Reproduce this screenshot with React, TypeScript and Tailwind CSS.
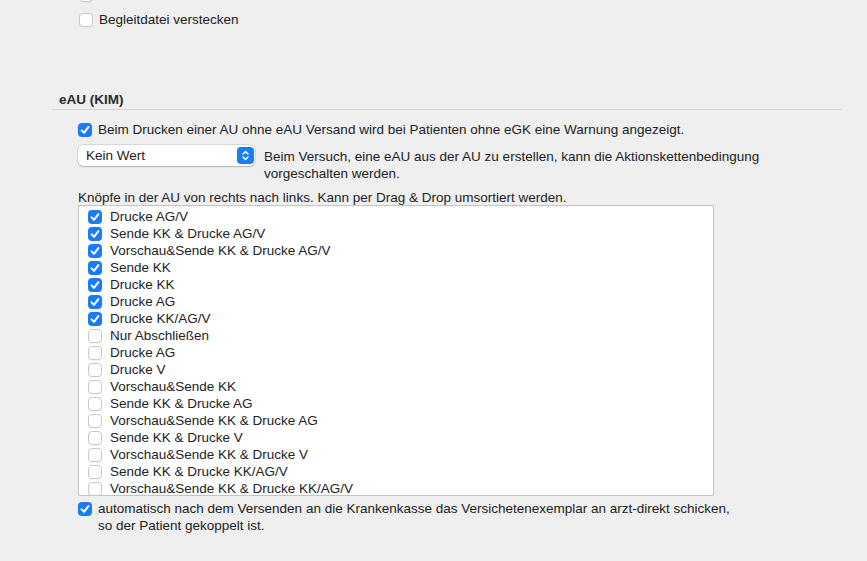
import React from 'react';

type Item = { label: string; checked: boolean };

const items: Item[] = [
  { label: 'Drucke AG/V', checked: true },
  { label: 'Sende KK & Drucke AG/V', checked: true },
  { label: 'Vorschau&Sende KK & Drucke AG/V', checked: true },
  { label: 'Sende KK', checked: true },
  { label: 'Drucke KK', checked: true },
  { label: 'Drucke AG', checked: true },
  { label: 'Drucke KK/AG/V', checked: true },
  { label: 'Nur Abschließen', checked: false },
  { label: 'Drucke AG', checked: false },
  { label: 'Drucke V', checked: false },
  { label: 'Vorschau&Sende KK', checked: false },
  { label: 'Sende KK & Drucke AG', checked: false },
  { label: 'Vorschau&Sende KK & Drucke AG', checked: false },
  { label: 'Sende KK & Drucke V', checked: false },
  { label: 'Vorschau&Sende KK & Drucke V', checked: false },
  { label: 'Sende KK & Drucke KK/AG/V', checked: false },
  { label: 'Vorschau&Sende KK & Drucke KK/AG/V', checked: false },
];

function Check({ checked }: { checked: boolean }) {
  if (checked) {
    return (
      <span className="flex h-[14px] w-[14px] shrink-0 items-center justify-center rounded-[4px] bg-[#1a7cf6]">
        <svg width="14" height="14" viewBox="0 0 14 14" fill="none" aria-hidden>
          <path d="M3.6 7.4 L6 9.9 L10.4 4.1" stroke="white" strokeWidth="2" strokeLinecap="round" strokeLinejoin="round" />
        </svg>
      </span>
    );
  }
  return (
    <span className="h-[14px] w-[14px] shrink-0 rounded-[4px] border border-[#c9c9c9] bg-white shadow-[0_0.5px_0.5px_rgba(0,0,0,0.08)]" />
  );
}

export default function App() {
  return (
    <div className="h-[561px] w-[867px] overflow-hidden bg-[#efefef] font-['Liberation_Sans',Arial,sans-serif] text-[13.5px] text-[#222]">
      {/* partially scrolled-off row */}
      <div className="-mt-[12px] flex h-[14px] items-center pl-[79px]">
        <Check checked={false} />
      </div>

      <div className="mt-[11px] flex h-[14px] items-center gap-[6px] pl-[79px]">
        <Check checked={false} />
        <span className="leading-[14px]">Begleitdatei verstecken</span>
      </div>

      <div className="ml-[52px] mt-[64px] h-[19px] w-[790px] border-b border-[#d6d6d6] pl-[7px] leading-[18px] font-bold text-[#2c2c2c]">
        eAU (KIM)
      </div>

      <div className="ml-[78px] mt-[13px] flex h-[14px] items-center gap-[6px]">
        <Check checked />
        <span className="leading-[14px]">
          Beim Drucken einer AU ohne eAU Versand wird bei Patienten ohne eGK eine Warnung angezeigt.
        </span>
      </div>

      <div className="ml-[78px] mt-[8px] flex items-start gap-[9px]">
        <div className="flex h-[21px] w-[177px] shrink-0 items-center justify-between rounded-[5px] bg-white pl-[8px] pr-[1px] shadow-[0_0_0_0.5px_rgba(0,0,0,0.18),0_1px_1.5px_rgba(0,0,0,0.18)]">
          <span className="leading-[17px]">Kein Wert</span>
          <span className="flex h-[17px] w-[17px] items-center justify-center rounded-[4px] bg-[#1a7cf6]">
            <svg width="17" height="17" viewBox="0 0 17 17" fill="none" aria-hidden>
              <path d="M6 7 L8.5 4.6 L11 7" stroke="white" strokeWidth="1.5" strokeLinecap="round" strokeLinejoin="round" />
              <path d="M6 10 L8.5 12.4 L11 10" stroke="white" strokeWidth="1.5" strokeLinecap="round" strokeLinejoin="round" />
            </svg>
          </span>
        </div>
        <p className="mt-[3px] w-[540px] leading-[17px]">
          Beim Versuch, eine eAU aus der AU zu erstellen, kann die Aktionskettenbedingung
          <br />
          vorgeschalten werden.
        </p>
      </div>

      <div className="ml-[78px] mt-[9px] h-[14px] leading-[14px]">
        Knöpfe in der AU von rechts nach links. Kann per Drag &amp; Drop umsortiert werden.
      </div>

      <div className="ml-[78px] h-[291px] w-[636px] overflow-hidden border border-[#c4c4c4] bg-white pt-[2px]">
        {items.map((it, i) => (
          <div key={i} className="flex h-[17px] items-center gap-[8px] pl-[9px]">
            <Check checked={it.checked} />
            <span className="leading-[17px]">{it.label}</span>
          </div>
        ))}
      </div>

      <div className="ml-[78px] mt-[4px] flex items-start gap-[6px]">
        <span className="mt-[2px]">
          <Check checked />
        </span>
        <p className="leading-[17px]">
          automatisch nach dem Versenden an die Krankenkasse das Versichetenexemplar an arzt-direkt schicken,
          <br />
          so der Patient gekoppelt ist.
        </p>
      </div>
    </div>
  );
}
